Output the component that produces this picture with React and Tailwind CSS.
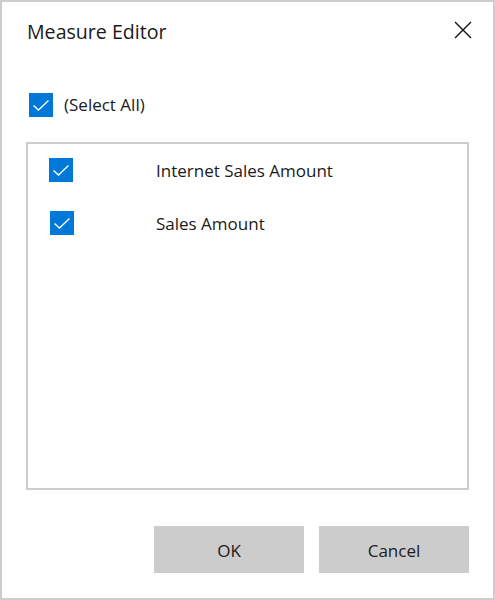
import { useState } from "react";

const FONT = { fontFamily: '"Open Sans", "Noto Sans", sans-serif' };

function Check({ checked, onClick, className = "" }) {
  return (
    <button
      type="button"
      onClick={onClick}
      className={`flex h-[24px] w-[24px] shrink-0 items-center justify-center ${
        checked ? "bg-[#0078d7]" : "border-2 border-[#333] bg-white"
      } ${className}`}
    >
      {checked && (
        <svg width="24" height="24" viewBox="0 0 24 24" fill="none">
          <path d="M4.5 12.5 L9.5 17 L19.5 7.5" stroke="#fff" strokeWidth="1.3" />
        </svg>
      )}
    </button>
  );
}

export default function App() {
  const [items, setItems] = useState([
    { name: "Internet Sales Amount", checked: true },
    { name: "Sales Amount", checked: true },
  ]);
  const allChecked = items.every((i) => i.checked);

  function toggle(idx) {
    setItems(items.map((it, i) => (i === idx ? { ...it, checked: !it.checked } : it)));
  }

  return (
    <div
      style={FONT}
      className="flex h-[600px] w-[495px] flex-col border-2 border-[#cccccc] bg-white text-[#1a1a1a]"
    >
      <header className="flex h-[60px] items-center justify-between pl-[25px] pr-[20px]">
        <h1 className="text-[19.6px] leading-[28px]">Measure Editor</h1>
        <button type="button" className="mb-[4px] flex h-[20px] w-[20px] items-center justify-center">
          <svg width="18" height="18" viewBox="0 0 18 18" fill="none">
            <path d="M1 1 L17 17 M17 1 L1 17" stroke="#111" strokeWidth="1.4" />
          </svg>
        </button>
      </header>

      <div className="mt-[31px] flex h-[24px] items-center pl-[27px]">
        <Check
          checked={allChecked}
          onClick={() => setItems(items.map((it) => ({ ...it, checked: !allChecked })))}
        />
        <span className="ml-[11px] text-[17px] leading-[24px]">(Select All)</span>
      </div>

      <div className="mx-[24px] mt-[25px] h-[348px] border-2 border-[#cccccc] pl-[21px] pt-[14px]">
        <ul className="flex flex-col gap-[29px]">
          {items.map((it, i) => (
            <li key={it.name} className="flex h-[24px] items-center">
              <Check checked={it.checked} onClick={() => toggle(i)} className={i === 1 ? "ml-px" : ""} />
              <span className={`${i === 1 ? "ml-[82px]" : "ml-[83px]"} pt-px text-[17px] leading-[24px]`}>
                {it.name}
              </span>
            </li>
          ))}
        </ul>
      </div>

      <div className="mt-[36px] flex justify-end gap-[15px] pr-[24px]">
        <button type="button" className="h-[47px] w-[150px] bg-[#cccccc] pt-[2px] text-[17px]">
          OK
        </button>
        <button type="button" className="h-[47px] w-[150px] bg-[#cccccc] pt-[2px] text-[17px]">
          Cancel
        </button>
      </div>
    </div>
  );
}
